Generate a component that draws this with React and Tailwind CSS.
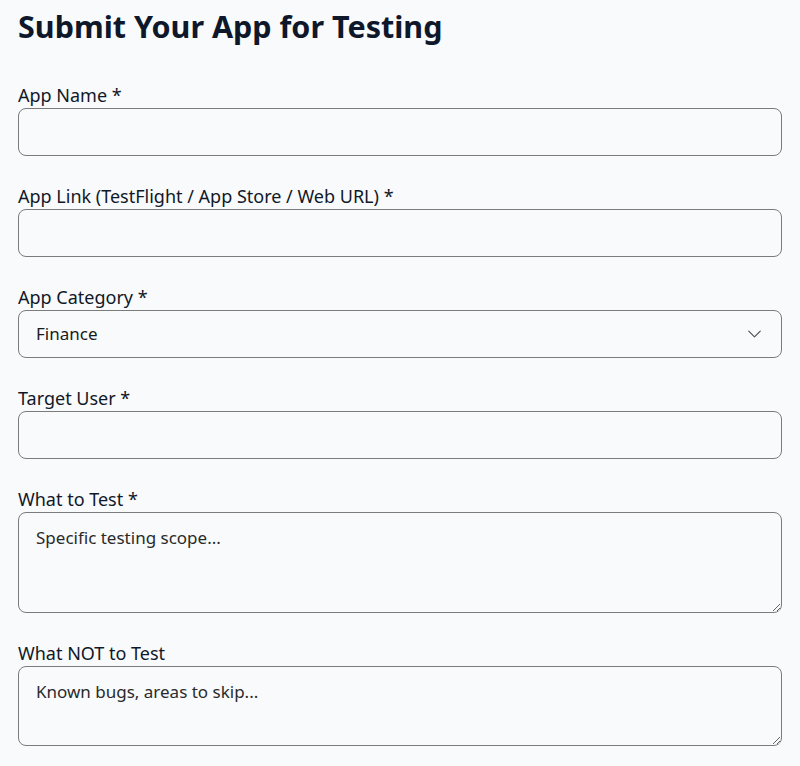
import { ChevronDown } from "lucide-react";

const fieldBox =
  "mt-[1px] block w-full rounded-lg border border-[#7b7b7b] bg-[#f8fafc] px-[17px] text-[17px] text-[#1a1a1a] placeholder:text-[#2a2a2a] outline-none";

function Label({ children }) {
  return <label className="block text-[18px] leading-6 text-[#111827]">{children}</label>;
}

export default function App() {
  return (
    <main
      className="min-h-screen bg-[#f8fafc] px-[18px] pt-[2px] text-[#111827]"
      style={{ fontFamily: '"Noto Sans", "Open Sans", sans-serif' }}
    >
      <h1 className="text-[30.5px] font-bold leading-[48px] text-[#0f172a]">
        Submit Your App for Testing
      </h1>

      <form className="mt-[33px] flex w-[764px] flex-col gap-[28px]">
        <div>
          <Label>App Name *</Label>
          <input type="text" className={`${fieldBox} h-12`} />
        </div>

        <div>
          <Label>App Link (TestFlight / App Store / Web URL) *</Label>
          <input type="text" className={`${fieldBox} h-12`} />
        </div>

        <div>
          <Label>App Category *</Label>
          <div className="relative">
            <select className={`${fieldBox} h-12 appearance-none`} defaultValue="Finance">
              <option>Finance</option>
              <option>Productivity</option>
              <option>Social</option>
              <option>Games</option>
            </select>
            <ChevronDown
              className="pointer-events-none absolute right-[16px] top-1/2 h-[23px] w-[23px] -translate-y-1/2 text-[#555]"
              strokeWidth={1.3}
            />
          </div>
        </div>

        <div>
          <Label>Target User *</Label>
          <input type="text" className={`${fieldBox} h-12`} />
        </div>

        <div>
          <Label>What to Test *</Label>
          <textarea
            rows={3}
            placeholder="Specific testing scope..."
            className={`${fieldBox} h-[101px] py-[13px] leading-6`}
          />
        </div>

        <div>
          <Label>What NOT to Test</Label>
          <textarea
            rows={2}
            placeholder="Known bugs, areas to skip..."
            className={`${fieldBox} h-[80px] py-[13px] leading-6`}
          />
        </div>
      </form>
    </main>
  );
}
